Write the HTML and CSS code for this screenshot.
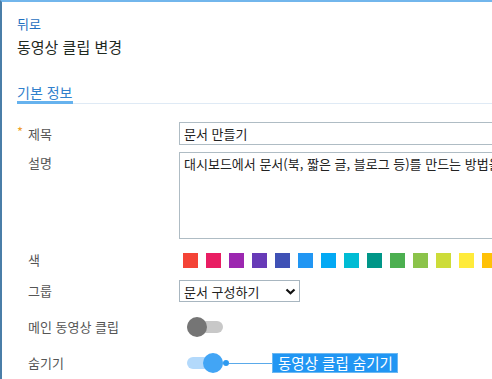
FILE: index.html
```html
<!DOCTYPE html>
<html lang="ko">

<head>
    <meta charset="UTF-8">
    <meta name="viewport" content="width=device-width, initial-scale=1.0">
    <title>동영상 클립 변경</title>
    <link rel="stylesheet" href="styles.css">
</head>

<body>
    <div class="page">
        <a class="back" href="#">뒤로</a>
        <h1 class="title">동영상 클립 변경</h1>

        <div class="tabs">
            <span class="tab active">기본 정보</span>
        </div>

        <form class="form">
            <div class="row">
                <label class="label required" for="name">제목</label>
                <input class="field" type="text" id="name" value="문서 만들기">
            </div>
            <div class="row row-top">
                <label class="label" for="desc">설명</label>
                <textarea class="field area" id="desc">대시보드에서 문서(북, 짧은 글, 블로그 등)를 만드는 방법을 알아보세요.</textarea>
            </div>
            <div class="row row-colors">
                <span class="label">색</span>
                <div class="swatches">
                    <span class="swatch" style="background:#f44336"></span>
                    <span class="swatch" style="background:#e91e63"></span>
                    <span class="swatch" style="background:#9c27b0"></span>
                    <span class="swatch" style="background:#673ab7"></span>
                    <span class="swatch" style="background:#3f51b5"></span>
                    <span class="swatch" style="background:#2196f3"></span>
                    <span class="swatch" style="background:#03a9f4"></span>
                    <span class="swatch" style="background:#00bcd4"></span>
                    <span class="swatch" style="background:#009688"></span>
                    <span class="swatch" style="background:#4caf50"></span>
                    <span class="swatch" style="background:#8bc34a"></span>
                    <span class="swatch" style="background:#cddc39"></span>
                    <span class="swatch" style="background:#ffeb3b"></span>
                    <span class="swatch" style="background:#ffc107"></span>
                </div>
            </div>
            <div class="row row-group">
                <label class="label" for="group">그룹</label>
                <div class="select">
                    <select id="group">
                        <option>문서 구성하기</option>
                    </select>
                    <svg class="chevron" width="11" height="7" viewBox="0 0 11 7">
                        <path d="M1.5 1.5 L5.5 5.2 L9.5 1.5" fill="none" stroke="#111" stroke-width="2.2" />
                    </svg>
                </div>
            </div>
            <div class="row row-main">
                <span class="label">메인 동영상 클립</span>
                <span class="switch"><span class="knob"></span></span>
            </div>
            <div class="row row-hide">
                <span class="label">숨기기</span>
                <span class="switch on"><span class="knob"></span></span>
                <span class="hint-dot"></span>
                <span class="hint-line"></span>
                <span class="hint">동영상 클립 숨기기</span>
            </div>
        </form>
    </div>
</body>

</html>
```

FILE: styles.css
```css
html,
body {
    margin: 0;
    height: 100%;
    overflow: hidden;
}

body {
    font-family: "Noto Sans CJK KR", "Noto Sans", sans-serif;
    background: #fff;
    color: #222;
}

.page {
    height: 100%;
    box-sizing: border-box;
    overflow: hidden;
    border-left: 2px solid #4a7ea8;
    border-top: 2px solid #72b6ec;
    padding: 13px 0 0 15px;
}

.back {
    display: block;
    font-size: 13px;
    line-height: 18px;
    color: #1f6fc0;
    text-decoration: none;
}

.title {
    margin: 4px 0 0;
    font-size: 15px;
    line-height: 20px;
    font-weight: normal;
    color: #1f2a1f;
}

.tabs {
    margin-top: 26px;
    border-bottom: 1px solid #dfeaf5;
    display: flex;
}

.tab {
    font-size: 14px;
    line-height: 18px;
    color: #2f80cc;
    border-bottom: 3px solid #66b2ee;
    margin-bottom: -1px;
    padding-right: 1px;
}

.form {
    margin-top: 18px;
}

.row {
    display: flex;
    align-items: center;
    white-space: nowrap;
}

.row-top {
    align-items: flex-start;
    margin-top: 7px;
}

.row-colors {
    margin-top: 12px;
}

.row-group {
    margin-top: 11px;
}

.row-main {
    margin-top: 16px;
}

.row-hide {
    margin-top: 17px;
}

.label {
    flex: 0 0 162px;
    box-sizing: border-box;
    padding-left: 11px;
    font-size: 13px;
    line-height: 18px;
    color: #555;
}

.row-top .label {
    padding-top: 2px;
}

.required::before {
    content: "*";
    display: inline-block;
    width: 11px;
    margin-left: -11px;
    color: #f0a02c;
    vertical-align: top;
    line-height: 14px;
}

.field {
    flex: 0 0 auto;
    width: 320px;
    height: 23px;
    box-sizing: border-box;
    margin: 0;
    padding: 0 4px;
    border: 1px solid #afbcc4;
    border-radius: 0;
    font-family: inherit;
    font-size: 13px;
    color: #222;
    outline: none;
}

.area {
    height: 87px;
    padding: 2px 4px;
    line-height: 18px;
    resize: none;
    white-space: pre;
    overflow: hidden;
}

.swatches {
    display: flex;
    gap: 8px;
    padding-left: 4px;
}

.swatch {
    flex: 0 0 15px;
    height: 15px;
}

.select {
    display: flex;
    align-items: center;
    width: 121px;
    height: 22px;
    box-sizing: border-box;
    border: 1px solid #a8b6c0;
}

.select select {
    appearance: none;
    -webkit-appearance: none;
    border: none;
    background: transparent;
    flex: 1;
    padding: 0 0 0 4px;
    font-family: inherit;
    font-size: 13px;
    color: #222;
    outline: none;
}

.chevron {
    margin: 0 3px 0 4px;
}

.switch {
    display: flex;
    align-items: center;
    width: 36px;
    height: 12px;
    margin-left: 8px;
    border-radius: 6px;
    background: #c8c8c8;
}

.knob {
    flex: 0 0 20px;
    height: 20px;
    border-radius: 50%;
    background: #757575;
}

.switch.on {
    justify-content: flex-end;
    background: #b3d9fb;
}

.switch.on .knob {
    background: #42a5f5;
}

.hint-dot {
    flex: 0 0 6px;
    height: 6px;
    border-radius: 50%;
    background: #2d9af0;
}

.hint-line {
    flex: 0 0 43px;
    height: 1px;
    background: #5aaaea;
}

.hint {
    box-sizing: border-box;
    height: 20px;
    padding: 0 4px 0 5px;
    border: 1px solid #6cb8f2;
    background: #2196f3;
    color: #fff;
    font-size: 14.5px;
    line-height: 18px;
}
```
